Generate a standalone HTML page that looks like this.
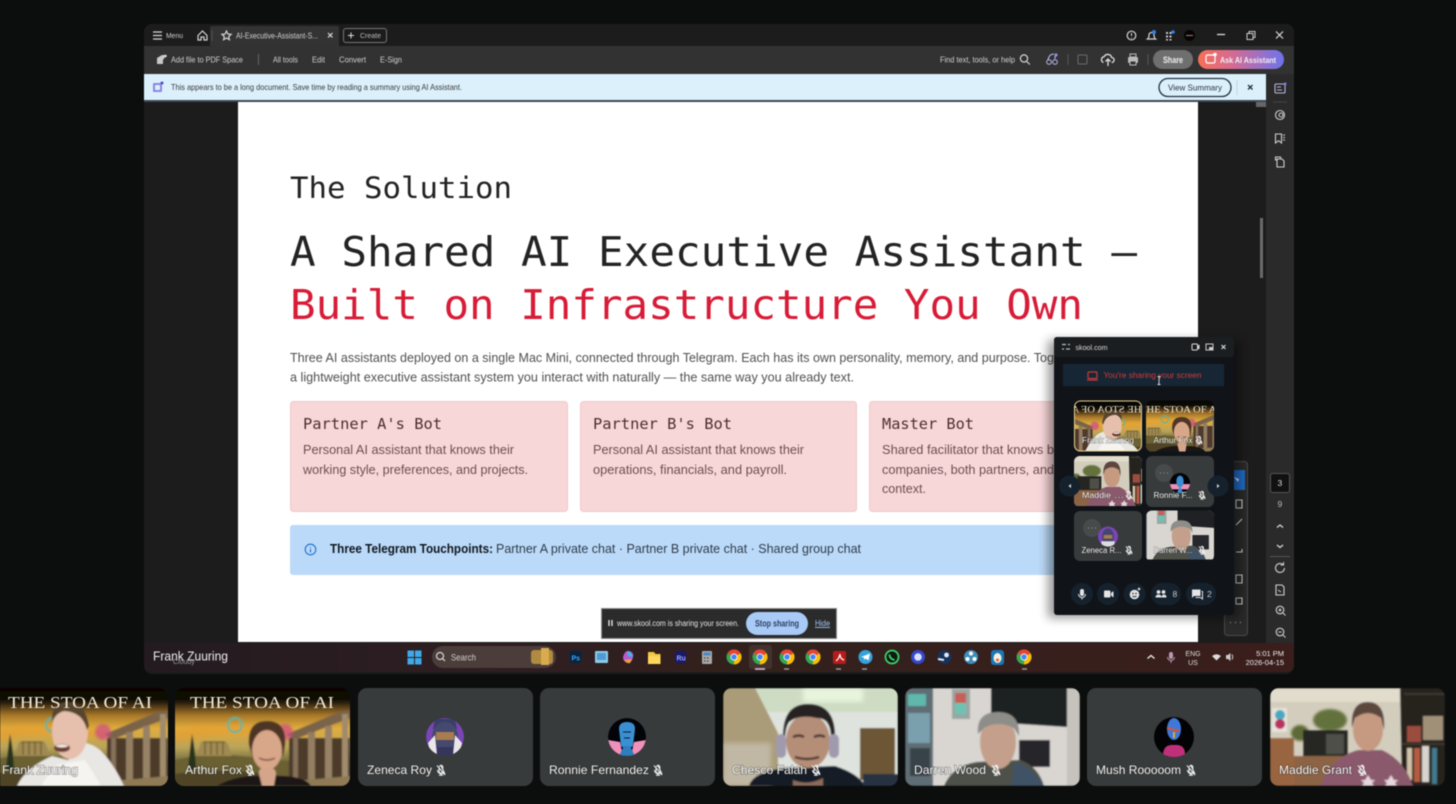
<!DOCTYPE html>
<html><head><meta charset="utf-8"><title>Screen share</title>
<style>
html,body{margin:0;padding:0;background:#0c0e0e;width:1456px;height:804px;overflow:hidden}
svg{display:block;filter:blur(.4px)}
text{font-family:"Liberation Sans",sans-serif}
.m{font-family:"DejaVu Sans Mono","Liberation Mono",monospace}
.ui{fill:#d0d0d0;font-size:8.3px}
.b{fill:#505050;font-size:13px}
.c{fill:#6d4f50;font-size:13px}
.ct{fill:#4b3030;font-size:15px}
.n{fill:#f2f2f2;font-size:12px;paint-order:stroke;stroke:rgba(40,40,40,.4);stroke-width:1.4px}
.mn{fill:#f0f0f0;font-size:8.6px;paint-order:stroke;stroke:rgba(40,40,40,.4);stroke-width:1px}
.ic{fill:none;stroke:#d5d5d5;stroke-width:1.2}
.ir{fill:none;stroke:#cfcfcf;stroke-width:1.1}
.mu{fill:none;stroke:#eee;stroke-width:1.1}
</style></head><body>
<svg width="1456" height="804" viewBox="0 0 1456 804" xmlns="http://www.w3.org/2000/svg">
<defs>
<linearGradient id="sky" x1="0" y1="0" x2="0" y2="1"><stop offset="0" stop-color="#070605"/><stop offset=".17" stop-color="#1f170a"/><stop offset=".3" stop-color="#a8782a"/><stop offset=".42" stop-color="#e0ad3c"/><stop offset=".6" stop-color="#b9a35a"/><stop offset=".72" stop-color="#77703f"/><stop offset="1" stop-color="#5d5130"/></linearGradient>
<linearGradient id="ai" x1="0" y1="0" x2="1" y2="0"><stop offset="0" stop-color="#f66f58"/><stop offset=".4" stop-color="#d56b93"/><stop offset="1" stop-color="#6e74ec"/></linearGradient>
<linearGradient id="tb" x1="0" y1="0" x2="1" y2="0"><stop offset="0" stop-color="#231b20"/><stop offset=".3" stop-color="#2f1e22"/><stop offset=".55" stop-color="#33211c"/><stop offset="1" stop-color="#3a1e1c"/></linearGradient>
<filter id="bl"><feGaussianBlur stdDeviation="1"/></filter>
<filter id="ph" x="0" y="0" width="100%" height="100%"><feGaussianBlur stdDeviation=".9"/></filter>
<filter id="bl2"><feGaussianBlur stdDeviation="2.4"/></filter>
<filter id="sh" x="-20%" y="-20%" width="140%" height="140%"><feGaussianBlur stdDeviation="5"/></filter>
<clipPath id="t175"><rect width="175" height="98" rx="9"/></clipPath>
<clipPath id="mini"><rect width="68" height="51" rx="6"/></clipPath>
<clipPath id="cav"><circle r="19"/></clipPath>

<g id="stoa">
<rect x="-5" y="-5" width="185" height="108" fill="url(#sky)"/>
<path d="M0 42 Q50 30 110 44 L110 50 Q50 42 0 55Z" fill="#e89b2e" opacity=".55" filter="url(#bl2)"/>
<path d="M0 72 Q35 64 65 68 Q90 70 120 74 V98 H0Z" fill="#6a6030"/>
<path d="M0 86 Q50 78 120 90 V98 H0Z" fill="#4f4425"/>
<path d="M22 68 L26 54 H52 L57 68Z" fill="#a08a52"/>
<path d="M28 54 h22 M30 54v13M36 54v13M42 54v13M48 54v13" stroke="#6d5b30" stroke-width="1.2" fill="none"/>
<path d="M13 82 Q15 60 17 46 Q20 60 21 82Z" fill="#26331c"/>
<path d="M112 46 L167 23 L175 23 V30 L118 52Z" fill="#7a6448"/>
<rect x="114" y="50" width="61" height="42" fill="#4e3a2c"/>
<rect x="118" y="50" width="5" height="44" fill="#85705a"/><rect x="133" y="44" width="7" height="50" fill="#937e62"/><rect x="150" y="38" width="7" height="56" fill="#978266"/><rect x="167" y="26" width="6" height="68" fill="#a08c6c"/>
<path d="M108 94 L175 88 V98 H100Z" fill="#8f7a54"/>
<circle cx="60" cy="37" r="7" fill="none" stroke="#4fb7a7" stroke-width="2.2" opacity=".85"/>
<circle cx="110" cy="44" r="8" fill="#d04a86" opacity=".7" filter="url(#bl)"/>
<rect x="-5" y="-5" width="185" height="17" fill="#000" opacity=".5"/>
</g>

<g id="frank">
<path d="M24 98 Q32 80 59 68 L75 72 L93 55 Q104 58 110 65 Q122 78 131 98Z" fill="#e9e7e3"/>
<path d="M48 98 Q56 84 66 76 L92 72 Q100 84 108 98Z" fill="#f6f4f0"/>
<ellipse cx="77" cy="43" rx="18" ry="28" fill="#e6c0ac"/>
<path d="M59 34 Q58 14 75 14 Q92 14 96 38 L94 42 Q90 24 71 23 Q63 25 59 34Z" fill="#57442f"/>
<ellipse cx="69" cy="60" rx="8" ry="4" fill="#6b3b30"/><ellipse cx="69" cy="58" rx="6" ry="1.500" fill="#f5efe8"/>
</g>
<g id="arthur">
<path d="M42 98 Q55 90 75 88 L110 88 Q132 90 136 98Z" fill="#1b1613"/>
<path d="M74 57 Q72 33 92 33 Q112 33 110 57 L108 69 L104 53 Q90 45 80 51 L78 71Z" fill="#4e3526"/>
<ellipse cx="92" cy="62" rx="15" ry="20" fill="#d8a688"/>
<path d="M84 70 Q92 74 100 70" stroke="#7a4d3e" stroke-width="1.500" fill="none"/>
<path d="M84 86 Q83 79 92 80 Q101 79 101 86 L99 98 H87Z" fill="#d5a58b"/>
</g>
<g id="darren">
<rect width="175" height="98" fill="#d9d6d2"/>
<rect x="0" y="0" width="28" height="98" fill="#5e6d74"/>
<rect x="3" y="25" width="22" height="30" fill="#7aa0ae"/><rect x="5" y="60" width="20" height="28" fill="#384349"/><rect x="3" y="6" width="18" height="12" fill="#5fb8ac"/>
<rect x="47" y="1" width="18" height="30" fill="#9aa6a2"/><rect x="50" y="5" width="11" height="10" fill="#c75f58"/><rect x="50" y="15" width="11" height="11" fill="#6ec2b2"/>
<path d="M86 0 H162 V39 L86 34Z" fill="#1f2124"/><rect x="114" y="52" width="31" height="27" fill="#26282b"/>
<rect x="162" y="0" width="13" height="98" fill="#c5c3bc"/>
<path d="M39 98 Q47 78 72 74 L115 72 Q133 78 139 98Z" fill="#4d5148"/>
<path d="M110 74 Q128 80 139 98 H106Z" fill="#3f5266"/>
<ellipse cx="93" cy="54" rx="18" ry="27" fill="#c4a08c"/>
<path d="M73 46 Q71 24 93 24 Q115 24 114 48 L109 40 Q93 32 79 40Z" fill="#8d8d89"/>
</g>
<g id="maddie">
<rect width="175" height="98" fill="#d3cdbd"/>
<rect width="175" height="14" fill="#e1dccb"/>
<rect x="2" y="20" width="15" height="24" fill="#e6e2dc"/><circle cx="10" cy="27" r="5" fill="#45a9c0"/><circle cx="10" cy="36" r="5" fill="#b8325f"/>
<ellipse cx="60" cy="32" rx="17" ry="11" fill="#64723c" filter="url(#bl)"/><ellipse cx="30" cy="45" rx="9" ry="8" fill="#5d6a34" filter="url(#bl)"/>
<rect x="0" y="50" width="24" height="48" fill="#99653f"/>
<rect x="33" y="42" width="45" height="27" rx="1" fill="#252522"/><rect x="56" y="46" width="18" height="20" fill="#4f4f48"/>
<rect x="24" y="68" width="60" height="30" fill="#8c6345"/>
<path d="M130 0 L175 0 V98 H132Z" fill="#26231f"/>
<path d="M134 6 L175 6 M132 56 L175 56" stroke="#3c3730" stroke-width="2"/>
<rect x="137" y="38" width="14" height="16" fill="#9b4d3c"/><rect x="153" y="28" width="20" height="24" fill="#a09078"/>
<rect x="137" y="60" width="5" height="32" fill="#d0c3a8"/><rect x="144" y="60" width="6" height="34" fill="#b45b42"/><rect x="152" y="58" width="7" height="36" fill="#d8d5cf"/><rect x="162" y="60" width="5" height="36" fill="#3f7c8e"/>
<path d="M50 98 Q60 70 88 62 H112 Q134 72 143 98Z" fill="#8a5a6c"/>
<ellipse cx="98" cy="42" rx="15" ry="21" fill="#c69a80"/>
<path d="M82 40 Q80 14 98 14 Q116 14 114 42 L111 30 Q98 20 85 30Z" fill="#5c463e"/>
<path d="M95 92 l3 -5 3 5 4 0 -3 3 2 3h-12l2 -3 -3 -3Z M118 92l3-5 3 5 4 0-3 3 2 3h-12l2-3-3-3Z" fill="#e6d6da"/>
</g>
<g id="mic"><path d="M0 -4.500 L4 4.500 M-2 -1.500 V0.500 A2.200 2.200 0 0 0 2.500 1.200 M-1.500 -3 A1.600 1.600 0 0 1 1.800 -3 V-1 M-3.500 0 A3.600 3.600 0 0 0 3.400 1.500 M0 3.400 V5.200 M-2 5.200 H2 M-4 -4.500 L4 5" class="mu"/></g>
<g id="chrome"><circle r="7.500" fill="#34a853"/><path d="M0 0 L-6.500 -3.750 A7.500 7.500 0 0 1 6.500 -3.750Z" fill="#ea4335"/><path d="M0 0 L6.500 -3.750 A7.500 7.500 0 0 1 0 7.500Z" fill="#fbbc05"/><circle r="3.500" fill="#fff"/><circle r="2.700" fill="#4285f4"/></g>
</defs>

<rect width="1456" height="804" fill="#0c0e0e"/>
<!-- Acrobat window -->
<rect x="144" y="24" width="1150" height="650" rx="8" fill="#1c1c1c"/>
<rect x="144" y="24" width="1150" height="22" rx="8" fill="#1c1c1c"/>
<rect x="210" y="26" width="129" height="21" rx="2" fill="#333"/>
<rect x="144" y="46" width="1150" height="28" fill="#323232"/>
<rect x="144" y="74" width="1122" height="27" fill="#dcf0fb"/>
<rect x="144" y="100" width="1122" height="2" fill="#3c4a50"/>
<rect x="1266" y="74" width="28" height="570" fill="#2a2a2a"/>
<rect x="1255" y="102" width="11" height="540" fill="#1c1c1c"/>
<rect x="1256" y="102" width="10" height="5" fill="#666"/>
<rect x="1260" y="218" width="3" height="60" fill="#6a6a6a"/>
<rect x="238" y="102" width="960" height="540" fill="#fff"/>

<!-- titlebar -->
<path d="M153 32h9M153 35.500h9M153 39h9" stroke="#d8d8d8" stroke-width="1.200"/>
<text x="166" y="38" class="ui" textLength="17" lengthAdjust="spacingAndGlyphs" style="font-size:7.500px">Menu</text>
<path d="M198 35.500 L202.500 31 L207 35.500 V40 H204 V37 H201 V40 H198Z" class="ic"/>
<path d="M212 30 V41" stroke="#555"/>
<path d="M226.500 31 l1.400 3 3.200 .3 -2.400 2.200 .7 3.200 -2.900 -1.700 -2.900 1.700 .7 -3.200 -2.400 -2.200 3.200 -.3Z" class="ic"/>
<text x="236" y="38.500" class="ui" style="font-size:8.300px" textLength="82" lengthAdjust="spacingAndGlyphs">AI-Executive-Assistant-S...</text>
<path d="M328 33l4.500 4.500M332.500 33l-4.500 4.500" stroke="#ddd" stroke-width="1.200"/>
<rect x="343.500" y="28.500" width="43" height="14" rx="2.500" fill="#1c1c1c" stroke="#777"/>
<path d="M348 35.500h6M351 32.500v6" stroke="#ddd" stroke-width="1"/>
<text x="360" y="38" class="ui" style="font-size:7.500px;fill:#bbb" textLength="21" lengthAdjust="spacingAndGlyphs">Create</text>
<circle cx="1131.500" cy="35.500" r="4.300" class="ic"/><path d="M1131.500 33v3M1131.500 37.500v.8" stroke="#ddd"/>
<path d="M1147.500 39 q1.500 -1 1.500 -4 a2.500 2.500 0 0 1 5 0 q0 3 1.500 4Z" class="ic"/><circle cx="1154" cy="32" r="2" fill="#2f80ed"/>
<path d="M1166 32h2v2h-2zM1169.500 32h2v2h-2zM1166 35.500h2v2h-2zM1169.500 35.500h2v2h-2zM1166 39h2v1.500h-2zM1169.500 39h2v1.500h-2z" fill="#ccc"/><circle cx="1173" cy="32" r="1.800" fill="#2f80ed"/>
<circle cx="1189.500" cy="35.500" r="5.500" fill="#050505"/><path d="M1186 35.500h7" stroke="#b77" stroke-width="1"/>
<path d="M1217 34.500h8" stroke="#ddd" stroke-width="1.300"/>
<path d="M1247 33.500h6v6h-6zM1249 33.500v-2h6v6h-2" fill="none" stroke="#ccc" stroke-width="1"/>
<path d="M1276 31.500l7 7M1283 31.500l-7 7" stroke="#ddd" stroke-width="1.200"/>
<!-- toolbar -->
<path d="M157 58 l5 -3 h3 v2 l-2 3 v4 h-6z" fill="#c8c8c8"/><path d="M164 56h3M165.500 54.500v3" stroke="#ddd"/>
<text x="171" y="62.500" class="ui" textLength="72" lengthAdjust="spacingAndGlyphs">Add file to PDF Space</text>
<path d="M258.500 54v11" stroke="#666"/>
<text x="273" y="62.500" class="ui" textLength="25" lengthAdjust="spacingAndGlyphs">All tools</text>
<text x="312" y="62.500" class="ui" textLength="13" lengthAdjust="spacingAndGlyphs">Edit</text>
<text x="339" y="62.500" class="ui" textLength="27" lengthAdjust="spacingAndGlyphs">Convert</text>
<text x="380" y="62.500" class="ui" textLength="22" lengthAdjust="spacingAndGlyphs">E-Sign</text>
<text x="940" y="62.500" class="ui" textLength="75" lengthAdjust="spacingAndGlyphs">Find text, tools, or help</text>
<circle cx="1024" cy="58.500" r="3.600" class="ic"/><path d="M1026.800 61.500l3 3" stroke="#d5d5d5" stroke-width="1.200"/>
<circle cx="1049" cy="62" r="2.300" fill="none" stroke="#b6b6ea"/><circle cx="1055" cy="62" r="2.300" fill="none" stroke="#b6b6ea"/><path d="M1048 60 q1 -6 6 -6 M1055 59 v-3" fill="none" stroke="#b6b6ea" stroke-width="1.100"/><circle cx="1056" cy="55" r="1.600" fill="#8f8fe8"/>
<path d="M1068 54v11" stroke="#555"/>
<rect x="1078" y="55" width="9" height="9" rx="1" fill="none" stroke="#6a6a6a"/>
<path d="M1103.500 62.500 a3 3 0 0 1 .6 -5.800 a4 4 0 0 1 7.500 .8 a2.500 2.500 0 0 1 0 5 M1108 66 v-6 M1105.500 61.500 l2.500 -2.500 2.500 2.500" fill="none" stroke="#e0e0e0" stroke-width="1.300"/>
<rect x="1128" y="57" width="10" height="6" rx="1" fill="#bbb"/><rect x="1130" y="54" width="6" height="3" fill="none" stroke="#bbb"/><rect x="1130" y="61" width="6" height="4" fill="#323232" stroke="#bbb"/>
<path d="M1148 54v11" stroke="#555"/>
<rect x="1153" y="50" width="40" height="19" rx="9.500" fill="#6f6f6f"/>
<text x="1163" y="63" style="font-size:9px;font-weight:bold;fill:#eee" textLength="20" lengthAdjust="spacingAndGlyphs">Share</text>
<rect x="1198" y="50" width="86" height="19" rx="9.500" fill="url(#ai)"/>
<rect x="1206" y="55" width="9" height="8" rx="1.500" fill="none" stroke="#fff" stroke-width="1.200"/><circle cx="1215" cy="54.500" r="1.800" fill="#fff"/>
<text x="1220" y="63" style="font-size:8.700px;font-weight:bold;fill:#f2eef5" textLength="56" lengthAdjust="spacingAndGlyphs">Ask AI Assistant</text>
<!-- banner -->
<rect x="153" y="83" width="9" height="9" rx="1" fill="#8b87e0"/><rect x="155" y="85" width="5" height="5" fill="#dcf0fb"/><circle cx="162" cy="83" r="1.500" fill="#4f4ad0"/>
<text x="171" y="90" style="font-size:8.300px;fill:#3a3a3a" textLength="291" lengthAdjust="spacingAndGlyphs">This appears to be a long document. Save time by reading a summary using AI Assistant.</text>
<rect x="1159" y="78.500" width="72" height="18" rx="9" fill="#dcf0fb" stroke="#20303c" stroke-width="1.300"/>
<text x="1168" y="90.500" style="font-size:8.500px;fill:#283440" textLength="54" lengthAdjust="spacingAndGlyphs">View Summary</text>
<path d="M1237 80v15" stroke="#c2d4de"/>
<path d="M1248 85l4.500 4.500M1252.500 85l-4.500 4.500" stroke="#20303c" stroke-width="1.300"/>
<!-- right rail -->
<rect x="1275" y="84" width="10" height="9" rx="1" fill="none" stroke="#b7b7d8" stroke-width="1.100"/><path d="M1277 87h4M1277 90h5" stroke="#b7b7d8"/><circle cx="1285" cy="84" r="1.500" fill="#7f7fe8"/>
<path d="M1273 102h14" stroke="#444"/>
<circle cx="1280" cy="115" r="4.500" class="ir"/><circle cx="1281" cy="115" r="2" class="ir"/>
<path d="M1275.500 134 h6 v9 l-3 -2.300 -3 2.300z" class="ir"/><path d="M1283 135h2M1283 137.500h2M1283 140h2" stroke="#cfcfcf"/>
<path d="M1277 160 h-1.500 v-3 h5 l0 1.500 M1277 159 h5 l2 2 v6 h-7z" class="ir"/>
<rect x="1270.500" y="473.500" width="19" height="19" rx="2" fill="#111" stroke="#555"/>
<text x="1277.500" y="486" style="font-size:8.500px;fill:#ddd">3</text>
<text x="1277.500" y="507" style="font-size:8.500px;fill:#bbb">9</text>
<path d="M1277 527.500l3-2.500 3 2.500M1277 545l3 2.500 3-2.500" fill="none" stroke="#ddd" stroke-width="1.200"/>
<path d="M1270 556.500h20" stroke="#555"/>
<path d="M1284.500 568 a4.500 4.500 0 1 1 -1.500 -3.400 M1283.500 562v3h-3" class="ir"/>
<path d="M1276 585 h6 l2 2 v8 h-8z" class="ir"/><path d="M1278 590 l3 2" stroke="#cfcfcf"/>
<circle cx="1280" cy="610" r="3.800" class="ir"/><path d="M1283 613l2.500 2.500M1278.300 610h3.400M1280 608.300v3.400" stroke="#cfcfcf"/>
<circle cx="1280" cy="632" r="3.800" class="ir"/><path d="M1283 635l2.500 2.500M1278.300 632h3.400" stroke="#cfcfcf"/>

<!-- page content -->
<text class="m" x="290" y="198" style="font-size:29.500px;fill:#222" textLength="222" lengthAdjust="spacingAndGlyphs">The Solution</text>
<text class="m" x="290" y="266" style="font-size:41px;fill:#232323" textLength="847" lengthAdjust="spacingAndGlyphs">A Shared AI Executive Assistant —</text>
<text class="m" x="290" y="319" style="font-size:41px;fill:#d81b36" textLength="793" lengthAdjust="spacingAndGlyphs">Built on Infrastructure You Own</text>
<text class="b" x="290" y="362" textLength="764" lengthAdjust="spacingAndGlyphs">Three AI assistants deployed on a single Mac Mini, connected through Telegram. Each has its own personality, memory, and purpose. Tog</text>
<text class="b" x="290" y="381.500" textLength="564" lengthAdjust="spacingAndGlyphs">a lightweight executive assistant system you interact with naturally — the same way you already text.</text>

<rect x="290.500" y="401.500" width="277" height="110" rx="3" fill="#f8d7d9" stroke="#f0c9cc"/>
<rect x="580.500" y="401.500" width="276" height="110" rx="3" fill="#f8d7d9" stroke="#f0c9cc"/>
<rect x="869.500" y="401.500" width="277" height="110" rx="3" fill="#f8d7d9" stroke="#f0c9cc"/>
<text class="m ct" x="303" y="429" textLength="139" lengthAdjust="spacingAndGlyphs">Partner A's Bot</text>
<text class="m ct" x="593" y="429" textLength="139" lengthAdjust="spacingAndGlyphs">Partner B's Bot</text>
<text class="m ct" x="882" y="429" textLength="92" lengthAdjust="spacingAndGlyphs">Master Bot</text>
<text class="c" x="303" y="454" textLength="211" lengthAdjust="spacingAndGlyphs">Personal AI assistant that knows their</text>
<text class="c" x="303" y="474" textLength="225" lengthAdjust="spacingAndGlyphs">working style, preferences, and projects.</text>
<text class="c" x="593" y="454" textLength="211" lengthAdjust="spacingAndGlyphs">Personal AI assistant that knows their</text>
<text class="c" x="593" y="474" textLength="194" lengthAdjust="spacingAndGlyphs">operations, financials, and payroll.</text>
<text class="c" x="882" y="454" textLength="172" lengthAdjust="spacingAndGlyphs">Shared facilitator that knows b</text>
<text class="c" x="882" y="474" textLength="172" lengthAdjust="spacingAndGlyphs">companies, both partners, and</text>
<text class="c" x="882" y="493" textLength="44" lengthAdjust="spacingAndGlyphs">context.</text>
<rect x="290" y="525" width="856" height="50" rx="3" fill="#bbd9f8"/>
<circle cx="310.500" cy="549.500" r="5.300" fill="none" stroke="#1d6fd0" stroke-width="1.100"/><path d="M310.500 547v.9M310.500 549v3.500" stroke="#1d6fd0" stroke-width="1.100"/>
<text x="330" y="553" style="font-size:13px;font-weight:bold;fill:#101820" textLength="163" lengthAdjust="spacingAndGlyphs">Three Telegram Touchpoints:</text>
<text x="496" y="553" style="font-size:13px;fill:#2f3d4c" textLength="365" lengthAdjust="spacingAndGlyphs">Partner A private chat · Partner B private chat · Shared group chat</text>

<!-- floating tool strip -->
<rect x="1224.500" y="461.500" width="23" height="174" rx="3" fill="#2a2a2a" stroke="#4a4a4a"/>
<rect x="1234" y="470" width="11" height="20" fill="#1f6bc4"/>
<path d="M1234 477l4 5 1-3z" fill="#ddd"/>
<path d="M1236 500h6v8h-6zM1236 525l6-6M1236 552h6v-3M1236 575h6v8h-6zM1236 598h6v6h-6z" class="ir"/>
<path d="M1230 622.500h1M1235 622.500h1M1240 622.500h1" stroke="#aaa"/>

<!-- share bar -->
<rect x="601.500" y="608.500" width="235" height="30" fill="#2b2b2b" stroke="#8b8b8b"/>
<path d="M609 620v6M612 620v6" stroke="#eee" stroke-width="1.300"/>
<text x="617" y="626" style="font-size:8px;fill:#e6e6e6" textLength="122" lengthAdjust="spacingAndGlyphs">www.skool.com is sharing your screen.</text>
<rect x="746" y="612" width="62" height="23" rx="11.500" fill="#a9c9f6"/>
<text x="755" y="626.500" style="font-size:8.800px;font-weight:bold;fill:#2b4264" textLength="44" lengthAdjust="spacingAndGlyphs">Stop sharing</text>
<text x="815" y="626" style="font-size:8.500px;fill:#a9c9f6;text-decoration:underline" textLength="15" lengthAdjust="spacingAndGlyphs">Hide</text>

<!-- taskbar -->
<path d="M144 643 H1294 V664 Q1294 672 1286 672 H152 Q144 672 144 664Z" fill="url(#tb)"/>
<text x="153" y="660.500" style="font-size:12.500px;fill:#eee" textLength="75" lengthAdjust="spacingAndGlyphs">Frank Zuuring</text>
<text x="173" y="664" style="font-size:7px;fill:#999">Cloudy</text>
<path d="M407.500 650.500h6.500v6.500h-6.500zM415 650.500h6.500v6.500h-6.500zM407.500 658h6.500v6.500h-6.500zM415 658h6.500v6.500h-6.500z" fill="#3ea8e8"/>
<rect x="432" y="646" width="124" height="22" rx="11" fill="#4b3d3a"/>
<circle cx="440" cy="656" r="3.500" class="ic"/><path d="M442.500 658.500l2.500 2.500" stroke="#ddd" stroke-width="1.200"/>
<text x="451" y="660.500" style="font-size:9.500px;fill:#d0d0d0" textLength="25" lengthAdjust="spacingAndGlyphs">Search</text>
<rect x="531" y="650" width="22" height="14" rx="3" fill="#b08a3e"/><rect x="541" y="648" width="8" height="17" fill="#d7ab4e"/>
<rect x="570" y="651" width="11" height="12" rx="2" fill="#07233f"/><text x="571.500" y="660.500" style="font-size:7px;fill:#3fa7f0;font-weight:bold">Ps</text>
<rect x="595" y="651" width="13" height="12" rx="1" fill="#8ecbe8"/><rect x="597" y="653" width="9" height="7" fill="#4d9bd0"/>
<path d="M623 657 q2 -7 6 -6 q5 1 4 6 q-1 6 -5 6 q-5 -1 -5 -6" fill="#b85ad0"/><path d="M627 651 q5 1 6 6 l-5 -1z" fill="#3db9e6"/><path d="M624 660 q3 4 6 3 l2 -4z" fill="#e8a23b"/>
<path d="M648 652h6l1.500 2h5v10h-12.500z" fill="#f4c842"/><rect x="648" y="656" width="12.500" height="8" fill="#ffd75a"/>
<rect x="675" y="651" width="11" height="12" rx="2" fill="#1a1a6a"/><text x="676.500" y="660.500" style="font-size:7px;fill:#9da4ff;font-weight:bold">Ru</text>
<rect x="702" y="651" width="10" height="13" rx="1" fill="#a8a8a8"/><rect x="703.500" y="652.500" width="7" height="3" fill="#4a88c4"/><path d="M704 658h1.500M707 658h1.500M704 661h1.500M707 661h1.500" stroke="#333"/>
<use href="#chrome" x="734" y="657"/><use href="#chrome" x="787" y="657"/><use href="#chrome" x="813" y="657"/><use href="#chrome" x="1024" y="657"/>
<rect x="749" y="645" width="23" height="24" rx="3" fill="#4a3c38" opacity=".7"/><use href="#chrome" x="760" y="657"/>
<path d="M755 669h10" stroke="#d8b8e0" stroke-width="1.600"/>
<path d="M784 669h5M836 669h5M862 669h5M1022 669h5" stroke="#999" stroke-width="1.400"/>
<rect x="833" y="651" width="13" height="13" rx="2" fill="#b71c1c"/><path d="M836 661 q3 -2 4 -7 q0 5 4 6" stroke="#fff" fill="none" stroke-width="1.200"/>
<circle cx="865.500" cy="657" r="7" fill="#34a3dc"/><path d="M861 657l9-3.500-1.500 7-3-2-1.500 1.500v-2.500z" fill="#fff"/>
<circle cx="892" cy="657" r="6.500" fill="#0d1b14" stroke="#3fd46a" stroke-width="1.700"/><path d="M889.500 654.500 q0 4.500 5 5.500" stroke="#3fd46a" stroke-width="1.800" fill="none"/>
<circle cx="918" cy="657" r="7" fill="#3548cf"/><circle cx="918" cy="657" r="3.800" fill="#dbe0ff"/>
<circle cx="944.500" cy="657" r="7" fill="#17325a"/><circle cx="946.500" cy="655" r="2.400" fill="#e4e9f0"/><path d="M938 659l6 1" stroke="#e4e9f0" stroke-width="2"/>
<circle cx="971" cy="657" r="7" fill="#3f8db8"/><circle cx="971" cy="653.500" r="2" fill="#fff"/><circle cx="967.500" cy="659" r="2" fill="#fff"/><circle cx="974.500" cy="659" r="2" fill="#fff"/>
<rect x="991" y="650" width="13" height="15" rx="3" fill="#1c78b4"/><ellipse cx="997.500" cy="658" rx="4" ry="5" fill="#f4f0e4"/><circle cx="997.500" cy="660" r="1.500" fill="#e86a28"/>
<path d="M1147.500 658.500l3.500-3 3.500 3" fill="none" stroke="#eee" stroke-width="1.300"/>
<rect x="1169" y="652" width="4" height="7" rx="2" fill="#b59bb0"/><path d="M1167.500 657a3.500 3.500 0 0 0 7 0M1171 660.500v2.500" stroke="#b59bb0" fill="none"/>
<text x="1193" y="656" text-anchor="middle" style="font-size:7px;fill:#ddd">ENG</text><text x="1193" y="665" text-anchor="middle" style="font-size:7px;fill:#ddd">US</text>
<path d="M1212 656 q4.500 -3.500 9 0 l-4.500 4.500z" fill="#ddd"/>
<path d="M1226 655h2l2.500-2v8l-2.500-2h-2z" fill="#ccc"/><path d="M1232 654.500q1.500 2.500 0 5" stroke="#ccc" fill="none"/>
<text x="1284" y="656" text-anchor="end" style="font-size:7.500px;fill:#eee">5:01 PM</text><text x="1284" y="665" text-anchor="end" style="font-size:7.500px;fill:#eee">2026-04-15</text>

<!-- skool popup -->
<rect x="1048" y="340" width="192" height="278" fill="#000" opacity=".4" filter="url(#sh)"/>
<rect x="1054" y="337" width="180" height="278" rx="3" fill="#101418"/>
<rect x="1054" y="337" width="180" height="20" rx="3" fill="#1b1e20"/>
<path d="M1062 344.500h4M1068 344.500h2M1062 349h2M1066 349h4" stroke="#bbb" stroke-width="1.200"/>
<text x="1075.500" y="350" style="font-size:7.500px;fill:#ddd" textLength="32" lengthAdjust="spacingAndGlyphs">skool.com</text>
<rect x="1192" y="344" width="5.500" height="6" rx="1" fill="none" stroke="#ddd"/><path d="M1198 345.500l1.500-1v5l-1.500-1z" fill="#ddd"/>
<rect x="1206" y="344" width="7" height="6" fill="none" stroke="#ccc"/><rect x="1209" y="347" width="4" height="3" fill="#ccc"/>
<path d="M1221.500 345l4 4M1225.500 345l-4 4" stroke="#ddd" stroke-width="1.100"/>
<rect x="1063" y="364" width="161" height="22" fill="#172634"/>
<rect x="1088" y="372" width="9" height="6.500" rx="1" fill="none" stroke="#c43a3a" stroke-width="1.200"/><path d="M1087 380h11" stroke="#c43a3a" stroke-width="1.200"/>
<text x="1103.500" y="378" style="font-size:8.500px;fill:#d03a3c" textLength="98" lengthAdjust="spacingAndGlyphs">You're sharing your screen</text>
<path d="M1157.500 376.500h3M1159 376.500v8M1157.500 384.500h3" stroke="#ddd" stroke-width=".9"/>

<!-- mini tiles -->
<g transform="translate(1074,400.500)"><g clip-path="url(#mini)"><rect width="68" height="51" fill="#0a0805"/><g transform="translate(79,2) scale(-.53,.53)"><use href="#stoa"/><use href="#frank"/></g>
<text transform="translate(68,12) scale(-1,1)" x="-6" y="0" style="font-family:'Liberation Serif',serif;font-size:9.500px;fill:#f3ead6" textLength="80" lengthAdjust="spacingAndGlyphs">THE STOA OF AI</text></g>
<rect x=".5" y=".5" width="67" height="50" rx="6" fill="none" stroke="#e7d08e"/></g>
<text class="mn" x="1082" y="443" textLength="52" lengthAdjust="spacingAndGlyphs">Frank Zuuring</text>

<g transform="translate(1146,400.500)"><g clip-path="url(#mini)"><g transform="translate(-13,-1) scale(.53)"><use href="#stoa"/><use href="#arthur"/></g>
<text x="-6" y="12" style="font-family:'Liberation Serif',serif;font-size:9.500px;fill:#f3ead6" textLength="80" lengthAdjust="spacingAndGlyphs">THE STOA OF AI</text></g></g>
<text class="mn" x="1153.500" y="443" textLength="39" lengthAdjust="spacingAndGlyphs">Arthur Fox</text>
<use href="#mic" transform="translate(1199,440) scale(.8)"/>

<g transform="translate(1074,456)"><g clip-path="url(#mini)"><g transform="translate(-14,-2) scale(.53)"><use href="#maddie"/></g></g></g>
<text class="mn" x="1082" y="498" textLength="29" lengthAdjust="spacingAndGlyphs">Maddie</text><text class="mn" x="1114" y="498" textLength="10" lengthAdjust="spacingAndGlyphs">...</text>
<use href="#mic" transform="translate(1129,495) scale(.8)"/>

<rect x="1146" y="456" width="68" height="51" rx="6" fill="#383b3b"/>
<circle cx="1164" cy="473" r="9" fill="#484b4b"/><path d="M1160 473h1M1163.500 473h1M1167 473h1" stroke="#999"/>
<g transform="translate(1180,483) scale(.53)"><g clip-path="url(#cav)"><circle r="19" fill="#03040a"/><rect x="-19" y="2" width="38" height="10" fill="#f090b8"/><ellipse cy="-3" rx="7" ry="11" fill="#3c8ed0"/><path d="M-6 19 L0 6 L6 19Z" fill="#3c8ed0"/></g></g>
<text class="mn" x="1153.500" y="498" textLength="39" lengthAdjust="spacingAndGlyphs">Ronnie F...</text>
<use href="#mic" transform="translate(1202,495) scale(.8)"/>

<rect x="1074" y="511" width="68" height="50" rx="6" fill="#383b3b"/>
<circle cx="1092" cy="528" r="9" fill="#484b4b"/><path d="M1088 528h1M1091.500 528h1M1095 528h1" stroke="#999"/>
<g transform="translate(1108,536.500) scale(.53)"><g clip-path="url(#cav)"><circle r="19" fill="#7a45b5"/><ellipse cy="0" rx="11" ry="15" fill="#43466e"/><rect x="-8" y="-3" width="16" height="7" fill="#a87c50"/><path d="M-13 9 L13 9 L11 19 H-11Z" fill="#ddd"/></g></g>
<text class="mn" x="1081.500" y="553" textLength="40" lengthAdjust="spacingAndGlyphs">Zeneca R...</text>
<use href="#mic" transform="translate(1129,550) scale(.8)"/>

<g transform="translate(1146,510.500)"><g clip-path="url(#mini)"><g transform="translate(-14,-3) scale(.53)"><use href="#darren"/></g></g></g>
<text class="mn" x="1153.500" y="553" textLength="39" lengthAdjust="spacingAndGlyphs">Darren W...</text>
<use href="#mic" transform="translate(1202,550) scale(.8)"/>

<circle cx="1069.500" cy="486" r="10.500" fill="#15222e"/><path d="M1071 484l-2.500 2 2.500 2z" fill="#ddd"/>
<circle cx="1218" cy="486" r="10.500" fill="#15222e"/><path d="M1217 484l2.500 2-2.500 2z" fill="#ddd"/>

<circle cx="1082" cy="594" r="11" fill="#15222e"/><rect x="1080" y="589" width="4" height="7" rx="2" fill="#e4e4e4"/><path d="M1078.500 594a3.500 3.500 0 0 0 7 0M1082 597.500v2" stroke="#e4e4e4" fill="none"/>
<circle cx="1108" cy="594" r="11" fill="#15222e"/><rect x="1104" y="590.500" width="6.500" height="7" rx="1" fill="#e4e4e4"/><path d="M1111 593l2.500-2v6.500l-2.500-2z" fill="#e4e4e4"/>
<circle cx="1134.500" cy="594" r="11" fill="#15222e"/><circle cx="1134.500" cy="594.500" r="4.800" fill="#e4e4e4"/><circle cx="1133" cy="593.500" r=".8" fill="#15222e"/><circle cx="1136" cy="593.500" r=".8" fill="#15222e"/><path d="M1132.500 596q2 1.500 4 0" stroke="#15222e" fill="none"/><path d="M1139 587.500v3M1137.500 589h3" stroke="#e4e4e4"/>
<rect x="1151" y="583" width="30" height="22" rx="11" fill="#15222e"/><circle cx="1158.500" cy="592" r="1.900" fill="#e4e4e4"/><circle cx="1163.500" cy="592" r="1.900" fill="#e4e4e4"/><path d="M1155.500 597.500q0-3 3-3t3 3zM1161.500 597.500q0-3 2.500-3t2.500 3z" fill="#e4e4e4"/>
<text x="1172.500" y="597" style="font-size:8.500px;fill:#ccc">8</text>
<rect x="1186" y="583" width="30" height="22" rx="11" fill="#15222e"/><path d="M1192 589.500h8.500v6.500h-6.500l-2 2z" fill="#e4e4e4"/><path d="M1201.500 591.500h1v7.500l-2-1.500h-5" fill="none" stroke="#e4e4e4"/>
<text x="1207" y="597" style="font-size:8.500px;fill:#ccc">2</text>

<!-- gallery -->
<g transform="translate(-7,688)"><g clip-path="url(#t175)"><g filter="url(#ph)"><use href="#stoa"/><use href="#frank"/></g></g></g>
<text x="8" y="708" style="font-family:'Liberation Serif',serif;font-size:17px;fill:#f3ead6" textLength="144" lengthAdjust="spacingAndGlyphs">THE STOA OF AI</text>
<text class="n" x="2" y="774" textLength="76" lengthAdjust="spacingAndGlyphs">Frank Zuuring</text>

<g transform="translate(175,688)"><g clip-path="url(#t175)"><g filter="url(#ph)"><use href="#stoa"/><use href="#arthur"/></g></g></g>
<text x="190" y="708" style="font-family:'Liberation Serif',serif;font-size:17px;fill:#f3ead6" textLength="144" lengthAdjust="spacingAndGlyphs">THE STOA OF AI</text>
<text class="n" x="185" y="774" textLength="57" lengthAdjust="spacingAndGlyphs">Arthur Fox</text>
<use href="#mic" x="250" y="770"/>

<rect x="358" y="688" width="175" height="98" rx="9" fill="#383b3b"/>
<g transform="translate(445,737)"><g clip-path="url(#cav)"><circle r="19" fill="#7a45b5"/><path d="M-10 -18 h20 l2 10 h-24z" fill="#38406a"/><ellipse cy="0" rx="13" ry="15" fill="#46496e"/><rect x="-9" y="-5" width="18" height="8" fill="#a87c50"/><path d="M-17 6 L-10 -2 L-8 19 H-14Z M17 6 L10 -2 L8 19 H14Z" fill="#e8e8e8"/><path d="M-8 10 H8 V19 H-8Z" fill="#34365c"/></g></g>
<text class="n" x="367" y="774" textLength="65" lengthAdjust="spacingAndGlyphs">Zeneca Roy</text>
<use href="#mic" x="441" y="770"/>

<rect x="540" y="688" width="175" height="98" rx="9" fill="#383b3b"/>
<g transform="translate(627,737)"><g clip-path="url(#cav)"><circle r="19" fill="#03040a"/><path d="M-19 3 L-7 5 L-4 19 H-19Z M19 3 L7 5 L4 19 H19Z" fill="#f191bb"/><path d="M-8 -8 Q-8 -15 0 -15 Q8 -15 8 -8 L6 9 L0 13 L-6 9Z" fill="#3a8fd2"/><path d="M-8 19 L-3 9 H3 L8 19Z" fill="#2f7fbe"/><path d="M-4 -5h8M-3 1h6" stroke="#0a1a30"/></g></g>
<text class="n" x="549" y="774" textLength="100" lengthAdjust="spacingAndGlyphs">Ronnie Fernandez</text>
<use href="#mic" x="658" y="770"/>

<g transform="translate(723,688)"><g clip-path="url(#t175)"><g filter="url(#ph)"><rect width="175" height="98" fill="#dfe3de"/>
<rect width="175" height="24" fill="#cfdcc4"/><rect x="80" y="0" width="60" height="14" fill="#e8f4dc" filter="url(#bl2)"/>
<path d="M0 0 H32 L55 45 V98 H0Z" fill="#aa9c78"/><path d="M0 55 H48 V98 H0Z" fill="#c0b8a4" filter="url(#bl2)"/>
<rect x="137" y="40" width="35" height="52" fill="#6c5634"/>
<path d="M26 98 Q30 84 62 80 L112 78 Q136 86 142 98Z" fill="#131a28"/>
<rect x="140" y="86" width="35" height="12" fill="#263242"/>
<ellipse cx="85" cy="53" rx="22" ry="27" fill="#b58e78"/>
<path d="M60 48 Q60 16 85 16 Q112 16 112 48 L108 50 Q108 30 94 30 Q76 26 66 34 Q62 40 62 52Z" fill="#282220"/>
<rect x="53" y="46" width="10" height="24" rx="5" fill="#a09aae"/><rect x="106" y="46" width="10" height="24" rx="5" fill="#a09aae"/>
<path d="M70 49 q6 -3 11 0 M91 49 q6 -3 11 0 M72 69 q12 4 24 0" stroke="#473530" stroke-width="2.400" fill="none"/>
<path d="M70 92 Q85 98 100 90 V98 H70Z" fill="#8c6a5a"/></g></g></g>
<text class="n" x="732" y="774" textLength="75" lengthAdjust="spacingAndGlyphs">Chesco Falah</text>
<use href="#mic" x="816" y="770"/>

<g transform="translate(905,688)"><g clip-path="url(#t175)"><g filter="url(#ph)"><use href="#darren"/></g></g></g>
<text class="n" x="914" y="774" textLength="72" lengthAdjust="spacingAndGlyphs">Darren Wood</text>
<use href="#mic" x="996" y="770"/>

<rect x="1087" y="688" width="175" height="98" rx="9" fill="#383b3b"/>
<g transform="translate(1174,737)"><circle r="20" fill="#030305"/><ellipse cy="-8" rx="7" ry="11" fill="#3f78d8"/><path d="M-7 -9l12 3" stroke="#e0522c" stroke-width="2"/><path d="M0 -5v6" stroke="#e6a830" stroke-width="2"/><path d="M-11 17 Q-10 7 0 8 Q11 7 11 17Q6 20 0 20 Q-6 20 -11 17Z" fill="#c0307a"/></g>
<text class="n" x="1096" y="774" textLength="85" lengthAdjust="spacingAndGlyphs">Mush Rooooom</text>
<use href="#mic" x="1191" y="770"/>

<g transform="translate(1270,688)"><g clip-path="url(#t175)"><g filter="url(#ph)"><use href="#maddie"/></g></g></g>
<text class="n" x="1279" y="774" textLength="73" lengthAdjust="spacingAndGlyphs">Maddie Grant</text>
<use href="#mic" x="1362" y="770"/>
</svg>
</body></html>
